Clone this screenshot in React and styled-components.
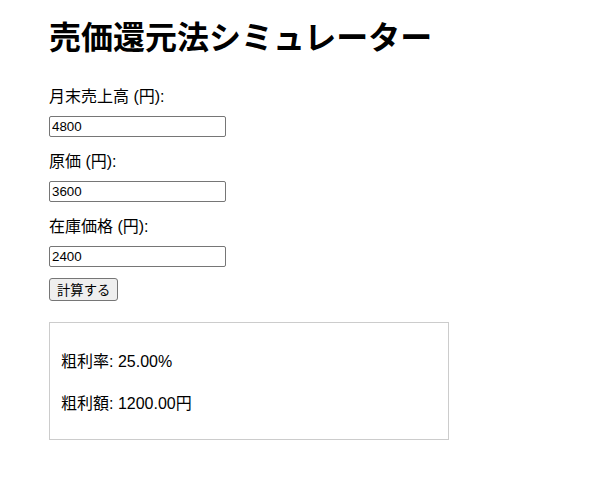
import React, { useState } from 'react';
import styled, { createGlobalStyle } from 'styled-components';

const GlobalStyle = createGlobalStyle`
  body {
    margin: 0;
    background: #ffffff;
    color: #000000;
    font-family: "Liberation Sans", Arial, "Noto Sans CJK JP", sans-serif;
  }
`;

const Page = styled.div`
  padding: 20px 49px;
`;

const Title = styled.h1`
  font-size: 32px;
  font-weight: bold;
  margin: 0 0 28px;
  line-height: 37px;
`;

const Form = styled.div`
  display: flex;
  flex-direction: column;
  gap: 13px;
  margin-bottom: 11px;
`;

const Field = styled.div`
  display: flex;
  flex-direction: column;
  align-items: flex-start;
`;

const Label = styled.label`
  font-size: 16px;
  line-height: 23px;
  margin-bottom: 8px;
`;

const Input = styled.input`
  box-sizing: border-box;
  width: 177px;
  height: 21px;
  padding: 1px 2px;
  border: 1px solid #767676;
  border-radius: 2px;
  font-family: "Liberation Sans", Arial, sans-serif;
  font-size: 13.33px;
`;

const Button = styled.button`
  display: block;
  box-sizing: border-box;
  height: 23px;
  font-family: "Liberation Sans", Arial, "Noto Sans CJK JP", sans-serif;
  font-size: 13.33px;
  padding: 1px 7px;
  border: 1px solid #767676;
  border-radius: 3px;
  background: #efefef;
  color: #000000;
`;

const Result = styled.div`
  box-sizing: border-box;
  width: 400px;
  margin-top: 21px;
  padding: 10px 11px 6px;
  border: 1px solid #cccccc;
`;

const Line = styled.p`
  font-size: 16px;
  line-height: 26px;
  margin: 16px 0;
`;

export default function App() {
  const [sales, setSales] = useState('4800');
  const [cost, setCost] = useState('3600');
  const [stock, setStock] = useState('2400');
  const [res, setRes] = useState({ rate: 25, amount: 1200 });

  const calc = () => {
    const s = Number(sales);
    const c = Number(cost);
    const amount = s - c;
    setRes({ rate: s ? (amount / s) * 100 : 0, amount });
  };

  return (
    <Page>
      <GlobalStyle />
      <Title>売価還元法シミュレーター</Title>
      <Form>
        <Field>
          <Label>月末売上高 (円):</Label>
          <Input value={sales} onChange={(e) => setSales(e.target.value)} />
        </Field>
        <Field>
          <Label>原価 (円):</Label>
          <Input value={cost} onChange={(e) => setCost(e.target.value)} />
        </Field>
        <Field>
          <Label>在庫価格 (円):</Label>
          <Input value={stock} onChange={(e) => setStock(e.target.value)} />
        </Field>
      </Form>
      <Button onClick={calc}>計算する</Button>
      <Result>
        <Line>粗利率: {res.rate.toFixed(2)}%</Line>
        <Line>粗利額: {res.amount.toFixed(2)}円</Line>
      </Result>
    </Page>
  );
}
